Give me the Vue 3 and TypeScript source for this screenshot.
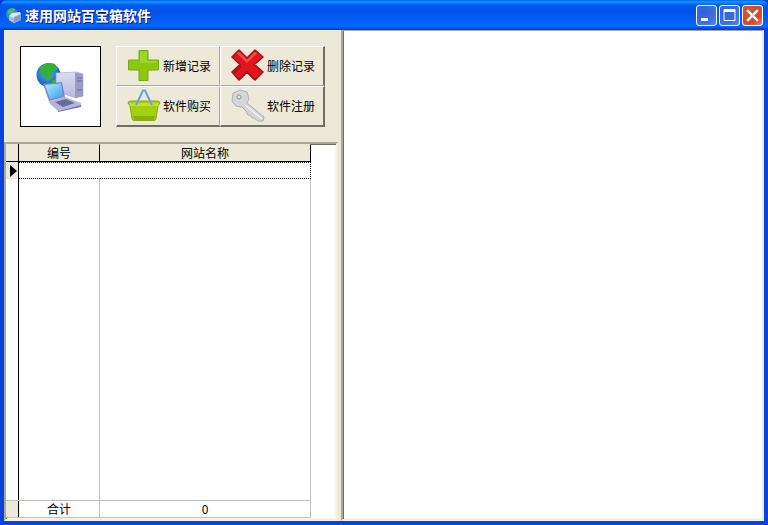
<template>
  <div class="window">
    <header class="titlebar">
      <svg class="app-icon" width="17" height="17" viewBox="0 0 17 17">
        <circle cx="7" cy="7" r="6" fill="#2b8fe0" />
        <path d="M2.5 4 Q6 0 10 2 L8 6 L4 8 Z" fill="#4fc24a" />
        <path d="M7 6 L15 5 L16 7 L16 13 L9 16 L4 13 L4 9 Z" fill="#dfe4f6" />
        <path d="M9 10 L16 7 L16 13 L9 16 Z" fill="#8b97c4" />
        <path d="M4 9 L9 11 L9 16 L4 13 Z" fill="#aeb8dc" />
      </svg>
      <span class="app-title">速用网站百宝箱软件</span>
      <div class="win-buttons">
        <button class="win-btn">
          <svg width="19" height="19" viewBox="0 0 19 19"><rect x="4" y="12" width="7" height="3" fill="#fff" /></svg>
        </button>
        <button class="win-btn">
          <svg width="19" height="19" viewBox="0 0 19 19">
            <path d="M4 3.5h11v11h-11z" fill="none" stroke="#fff" />
            <rect x="4" y="4" width="11" height="2" fill="#fff" />
          </svg>
        </button>
        <button class="win-btn close">
          <svg width="19" height="19" viewBox="0 0 19 19">
            <path d="M5 5L14 14M14 5L5 14" stroke="#fff" stroke-width="2.4" stroke-linecap="square" />
          </svg>
        </button>
      </div>
    </header>

    <main class="client">
      <section class="left">
        <div class="toolbar">
          <div class="logo-box">
            <svg width="79" height="79" viewBox="21 47 79 79">
              <defs>
                <radialGradient id="globe" cx="0.45" cy="0.4" r="0.7">
                  <stop offset="0" stop-color="#4fb4f4" />
                  <stop offset="1" stop-color="#0a4bb8" />
                </radialGradient>
                <linearGradient id="screen" x1="0" y1="0" x2="1" y2="1">
                  <stop offset="0" stop-color="#b4ecff" />
                  <stop offset="1" stop-color="#2fa2f0" />
                </linearGradient>
                <linearGradient id="tower" x1="0" y1="0" x2="0" y2="1">
                  <stop offset="0" stop-color="#dcdcf0" />
                  <stop offset="1" stop-color="#b8b8de" />
                </linearGradient>
              </defs>
              <circle cx="48.5" cy="75" r="12" fill="url(#globe)" />
              <path d="M39 68 Q46 61 55 64 L58 69 L52 72 L52 78 L47 81 L42 75 Z" fill="#35b03a" />
              <path d="M52 80 L56 79 L55 85 L52 85 Z" fill="#35b03a" />
              <path d="M56 73 L76 72 L83 74 L83 96 L76 98 L64 94 L56 90 Z" fill="url(#tower)" stroke="#a0a0c8" stroke-width="0.6" />
              <path d="M75 72.5 L83 74 L83 96 L75 98 Z" fill="#9c9cc6" />
              <path d="M77 78 h5 M77 81 h5 M77 90 h5" stroke="#6a6a96" />
              <path d="M43 84 L62 82 L65 97 L49 101 Z" fill="#8484c4" />
              <path d="M45 85 L61 83.5 L63 96 L50 99 Z" fill="url(#screen)" />
              <path d="M49 101 L65 97 L81 103 L81 105 L58 111 L50 104 Z" fill="#b4b4de" />
              <path d="M55 102 L66 99 L75 103 L63 107 Z" fill="#6a6a9c" />
              <path d="M58 111 L81 105 L81 107 L58 112 Z" fill="#7474a8" />
            </svg>
          </div>
          <div class="actions">
            <button class="action">
              <svg class="icon" width="34" height="34" viewBox="127 51 34 34">
                <path d="M139 52.5h9v9.5h10.5v10H148v10.5h-9V72h-10.5V62H139z" fill="#8cc80c" stroke="#78a818" stroke-linejoin="round" />
                <path d="M140 54h7v9h10v2h-17z" fill="#a0d628" />
              </svg>
              <span>新增记录</span>
            </button>
            <button class="action">
              <svg class="icon" width="34" height="34" viewBox="231 51 34 34">
                <path d="M239 52L247 60L255 52L263 59L254.5 66.5L263 74L255 82L247 74L239 82L232 74L240 66.5L232 59Z" fill="#e4141e" stroke="#b20e16" stroke-width="1.6" stroke-linejoin="round" />
                <path d="M239 53.5L247 61.5L255 53.5L257 55.5L247 65L237 55.5Z" fill="#f04a4a" />
                <path d="M233.5 74L240 67.5L241.5 69L235 75.5ZM247 72.5L255 80.5L253.5 81.5L247 75L240.5 81.5L239 80.5Z" fill="#b20e16" />
              </svg>
              <span>删除记录</span>
            </button>
            <button class="action">
              <svg class="icon" width="34" height="34" viewBox="127 91 34 34">
                <path d="M128 105 Q128 103 131 103 L157 103 Q160 103 160 105 L158 108 L156 121 Q156 122.5 153 122.5 L135 122.5 Q132 122.5 132 121 L130 108 Z" fill="#a4d00c" stroke="#8cac0c" />
                <path d="M129 105 H159 L158 108 H130 Z" fill="#c0e030" />
                <path d="M133 118 H155 L154 122 H134 Z" fill="#88b00a" />
                <path d="M136 107 L143 92.5 L145 92.5 L152 107" fill="none" stroke="#6f9fe6" stroke-width="2" />
              </svg>
              <span>软件购买</span>
            </button>
            <button class="action">
              <svg class="icon" width="34" height="34" viewBox="231 91 34 34">
                <path d="M233 95 L240 92 L247 94 L249 101 L247 105 L264 119 L263 123 L258 123 L254 120 L252 120 L250 117 L248 117 L246 113 L242 109 L236 108 L232 103 Z" fill="#d6d6d6" stroke="#b0b0b0" />
                <circle cx="239" cy="99" r="2" fill="#ebe8dc" stroke="#8d8d8d" />
                <path d="M245 107 L262 121" stroke="#f2f2f2" stroke-width="1.5" />
              </svg>
              <span>软件注册</span>
            </button>
          </div>
        </div>

        <div class="sunken grid-pane">
          <div class="grid">
            <div class="row head">
              <div class="ind"></div>
              <div class="cell">编号</div>
              <div class="cell">网站名称</div>
            </div>
            <div class="row current">
              <div class="ind"><span class="arrow"></span></div>
              <div class="cell"></div>
              <div class="cell"></div>
            </div>
            <div class="row body">
              <div class="ind plain"></div>
              <div class="cell"></div>
              <div class="cell"></div>
            </div>
            <div class="row foot">
              <div class="ind"></div>
              <div class="cell">合计</div>
              <div class="cell">0</div>
            </div>
          </div>
        </div>
      </section>

      <div class="splitter"></div>

      <section class="sunken right"></section>
    </main>
  </div>
</template>

<script setup lang="ts">
</script>

<style>
html,
body {
  margin: 0;
  background: #0831d9;
}
</style>

<style scoped>
.window {
  width: 768px;
  height: 525px;
  display: flex;
  flex-direction: column;
  box-sizing: border-box;
  padding-bottom: 4px;
  background: #0843dc;
  border-radius: 7px 7px 0 0;
  overflow: hidden;
  font-family: "Noto Sans CJK SC", "Liberation Sans", sans-serif;
  font-size: 12px;
  color: #000;
}

.titlebar {
  height: 30px;
  flex: none;
  display: flex;
  align-items: center;
  padding: 0 5px 0 5px;
  box-sizing: border-box;
  background: linear-gradient(to bottom, #0a5fe8 0, #0a9bff 2px, #0058ee 5px, #0054e9 12px, #0066ff 24px, #0066ff 27px, #0350e0 28px, #003dd7 30px);
}

.app-icon {
  flex: none;
  margin-right: 3px;
}

.app-title {
  color: #fff;
  font-size: 14px;
  font-weight: 700;
  line-height: 30px;
  text-shadow: 1px 1px 0 #0f1089;
}

.win-buttons {
  margin-left: auto;
  display: flex;
  gap: 2px;
}

.win-btn {
  width: 21px;
  height: 21px;
  padding: 0;
  box-sizing: border-box;
  border: 1px solid #fff;
  border-radius: 3px;
  background: radial-gradient(circle at 30% 30%, #2d62dc 0%, #3a6ee4 60%, #5a88ec 100%);
}

.win-btn svg {
  display: block;
}

.win-btn.close {
  background: radial-gradient(circle at 30% 30%, #d8502c 0%, #d24a2c 60%, #e8846c 100%);
}

.client {
  flex: 1;
  min-height: 0;
  margin: 0 4px 0 4px;
  display: flex;
  background: #ece9d8;
}

.left {
  width: 335px;
  flex: none;
  display: flex;
  flex-direction: column;
}

.toolbar {
  height: 112px;
  flex: none;
  box-sizing: border-box;
  padding: 16px 0 0 16px;
  display: flex;
  align-items: flex-start;
}

.logo-box {
  width: 81px;
  height: 81px;
  box-sizing: border-box;
  border: 1px solid #000;
  background: #fff;
}

.logo-box svg {
  display: block;
}

.actions {
  margin-left: 15px;
  display: grid;
  grid-template-columns: 104px 105px;
  grid-template-rows: 40px 41px;
}

.action {
  display: flex;
  align-items: center;
  padding: 0 0 0 10px;
  box-sizing: border-box;
  background: #ece9d8;
  border: 1px solid;
  border-color: #fff #aca899 #aca899 #fff;
  font: inherit;
  color: #000;
}

.action span {
  margin-top: -2px;
}

.action:nth-child(2),
.action:nth-child(4) {
  border-right: 2px solid #716f64;
}

.action:nth-child(3),
.action:nth-child(4) {
  border-bottom: 2px solid #716f64;
}

.icon {
  flex: none;
  margin-right: 2px;
}

.sunken {
  box-sizing: border-box;
  border: 2px solid;
  border-color: #aca899 #f1efe2 #f1efe2 #aca899;
  background: #fff;
  box-shadow: inset 1px 1px 0 #716f64, inset -1px -1px 0 #f6f5ef;
}

.grid-pane {
  flex: 1;
  min-height: 0;
  padding: 0 0 1px 0;
  margin-right: 1px;
}

.grid {
  width: 305px;
  height: 100%;
  display: flex;
  flex-direction: column;
}

.row {
  display: grid;
  grid-template-columns: 13px 81px 211px;
  box-sizing: border-box;
}

.cell {
  box-sizing: border-box;
  text-align: center;
  line-height: 16px;
  border-right: 1px solid #c0c0c0;
}

.ind {
  box-sizing: border-box;
  border-right: 1px solid #000;
  background: #ece9d8;
  display: flex;
  align-items: center;
  padding-left: 4px;
}

.ind.plain {
  background: #fff;
}

.head {
  height: 18px;
  flex: none;
  background: #ece9d8;
  border-bottom: 1px solid #000;
}

.head .cell {
  border-right-color: #000;
  border-top: 1px solid #ece9d8;
}

.current {
  height: 17px;
  flex: none;
}

.current .cell {
  height: 17px;
  border-top: 1px dotted #000;
  border-bottom: 1px dotted #000;
  border-right-color: transparent;
}

.current .cell:last-child {
  border-right: 1px dotted #000;
}

.arrow {
  width: 0;
  height: 0;
  border-left: 7px solid #000;
  border-top: 6px solid transparent;
  border-bottom: 6px solid transparent;
}

.body {
  flex: 1;
  min-height: 0;
}

.foot {
  height: 18px;
  flex: none;
  border-top: 1px solid #c0c0c0;
  border-bottom: 1px solid #c0c0c0;
}

.splitter {
  width: 2px;
  flex: none;
}

.right {
  flex: 1;
  min-width: 0;
  border-top-width: 1px;
  box-shadow: inset 1px 0 0 #716f64, inset -1px -1px 0 #f6f5ef;
}
</style>
